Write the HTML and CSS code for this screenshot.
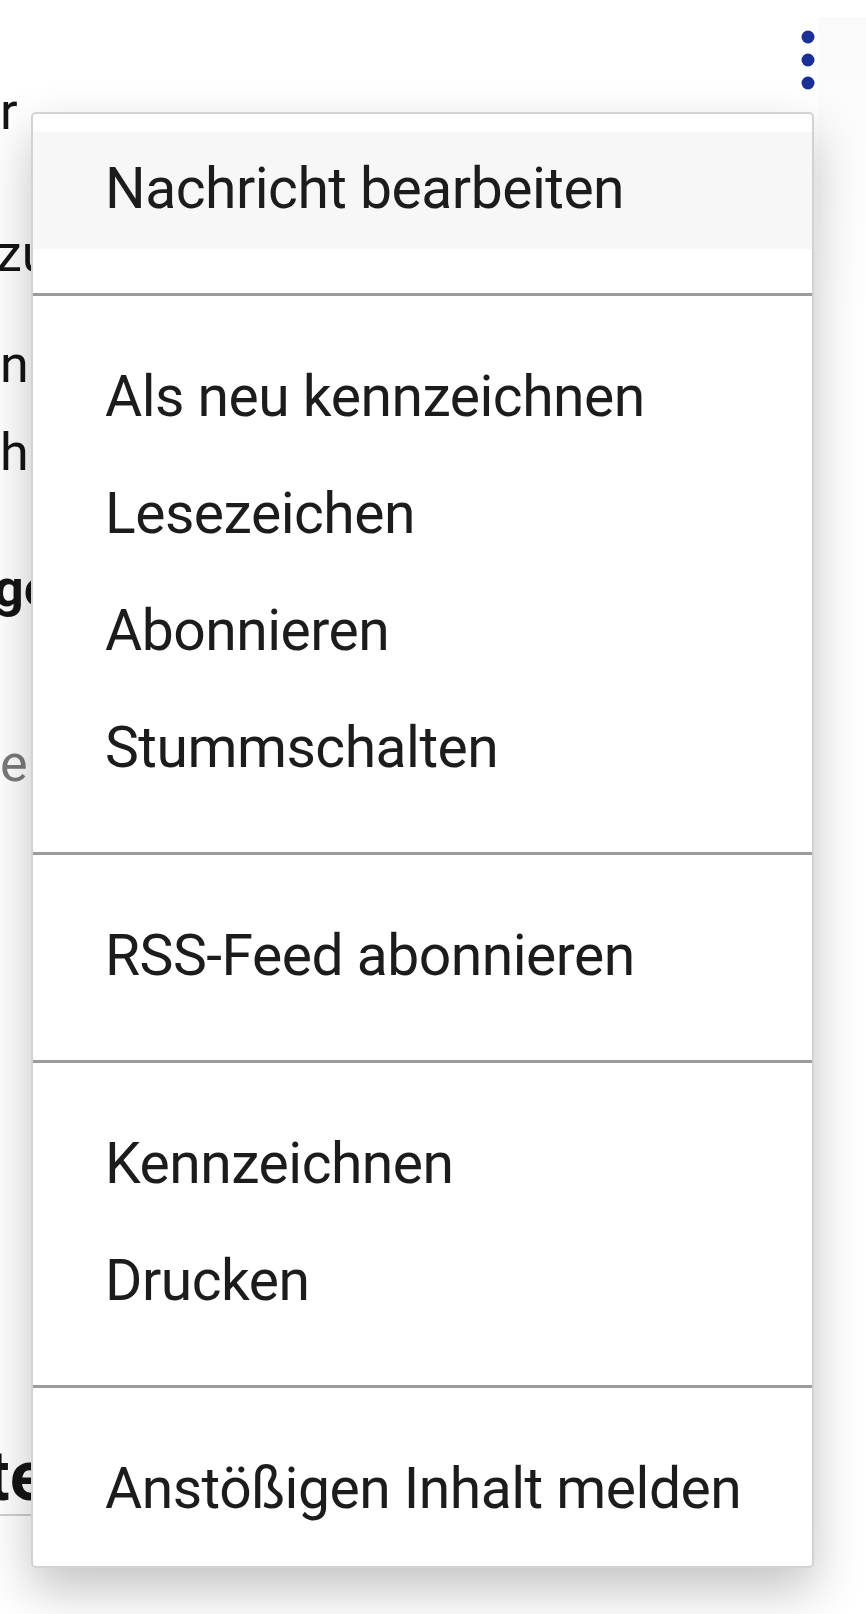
FILE: index.html
```html
<!DOCTYPE html>
<html lang="de">
<head>
<meta name="viewport" content="width=device-width, initial-scale=1">
<link rel="stylesheet" href="styles.css">
</head>
<body>

<div class="page">
  <!-- thread text behind the menu, only its left edge peeks out -->
  <div class="thread">
    <p class="line l-r">r</p>
    <p class="line l-zu">zu</p>
    <p class="line l-n">n</p>
    <p class="line l-h">h</p>
    <p class="line l-ge strong">ge</p>
    <p class="line l-e muted">er</p>
    <h2 class="line l-te">te</h2>
    <hr class="thread-rule">
  </div>

  <div class="gap"></div>

  <button class="more-btn" type="button" aria-label="Weitere Optionen">
    <svg width="14" height="60" viewBox="0 0 14 60">
      <circle cx="7" cy="7" r="6.5"/>
      <circle cx="7" cy="30" r="6.5"/>
      <circle cx="7" cy="53" r="6.5"/>
    </svg>
  </button>

  <div class="side-rail"></div>

  <div class="options-menu" role="menu">
    <div class="menu-group first">
      <a class="menu-item active" role="menuitem">Nachricht bearbeiten</a>
    </div>
    <div class="menu-group">
      <a class="menu-item" role="menuitem">Als neu kennzeichnen</a>
      <a class="menu-item" role="menuitem">Lesezeichen</a>
      <a class="menu-item" role="menuitem">Abonnieren</a>
      <a class="menu-item" role="menuitem">Stummschalten</a>
    </div>
    <div class="menu-group">
      <a class="menu-item" role="menuitem">RSS-Feed abonnieren</a>
    </div>
    <div class="menu-group">
      <a class="menu-item" role="menuitem">Kennzeichnen</a>
      <a class="menu-item" role="menuitem">Drucken</a>
    </div>
    <div class="menu-group last">
      <a class="menu-item" role="menuitem">Anstößigen Inhalt melden</a>
    </div>
  </div>
</div>

</body>
</html>
```

FILE: styles.css
```css
* {
  box-sizing: border-box;
}

body {
  margin: 0;
  font-family: Roboto, "Noto Sans", Arial, sans-serif;
  background-color: white;
  color: #141414;
}

/* Page: thread column, kebab button, right rail */
.page {
  position: relative;
  width: 866px;
  height: 1614px;
  overflow: hidden;
  display: grid;
  grid-template-columns: 60px 1fr 14px 51px;
  align-items: start;
}

.thread {
  min-width: 0;
  white-space: nowrap;
}

.line {
  margin: 0;
  font-size: 52px;
  line-height: 60px;
  font-weight: 400;
}

.l-r { margin-top: 82px; }
.l-zu { margin-top: 82px; margin-left: -4px; }
.l-n { margin-top: 51px; }
.l-h { margin-top: 28px; }
.l-ge { margin-top: 76px; margin-left: -6px; }
.l-e { margin-top: 115px; }

.strong {
  font-weight: 700;
}

.muted {
  color: #7a7a7a;
}

.l-te {
  margin-top: 646px;
  margin-left: -14px;
  font-size: 70px;
  line-height: 72px;
  font-weight: 700;
}

.thread-rule {
  margin: 2px 0 0 0;
  border: none;
  border-top: 2px solid #cfcfcf;
}

/* Kebab button */
.more-btn {
  margin: 30px 0 0 0;
  padding: 0;
  border: none;
  background: none;
  display: block;
  cursor: pointer;
}

.more-btn svg {
  display: block;
  fill: #1b2f97;
}

.side-rail {
  margin: 17px 0 0 3px;
  height: 300px;
  background: linear-gradient(#fafafa, #ffffff);
}

/* Options dropdown */
.options-menu {
  position: absolute;
  left: 31px;
  top: 112px;
  width: 783px;
  background-color: white;
  border: 2px solid #d2d2d2;
  border-radius: 5px;
  box-shadow: 0 22px 50px rgba(0, 0, 0, 0.24);
}

.menu-group {
  padding: 44px 0;
  border-top: 3px solid #9b9b9b;
}

.menu-group.first {
  padding-top: 18px;
  border-top: none;
}

.menu-group.last {
  padding-bottom: 17px;
}

.menu-item {
  display: block;
  height: 117px;
  padding-left: 72px;
  font-size: 57px;
  line-height: 113px;
  font-weight: 400;
  letter-spacing: -0.5px;
  color: #1c1c1c;
  cursor: pointer;
}

.menu-item.active {
  background-color: #f7f7f7;
}
```
